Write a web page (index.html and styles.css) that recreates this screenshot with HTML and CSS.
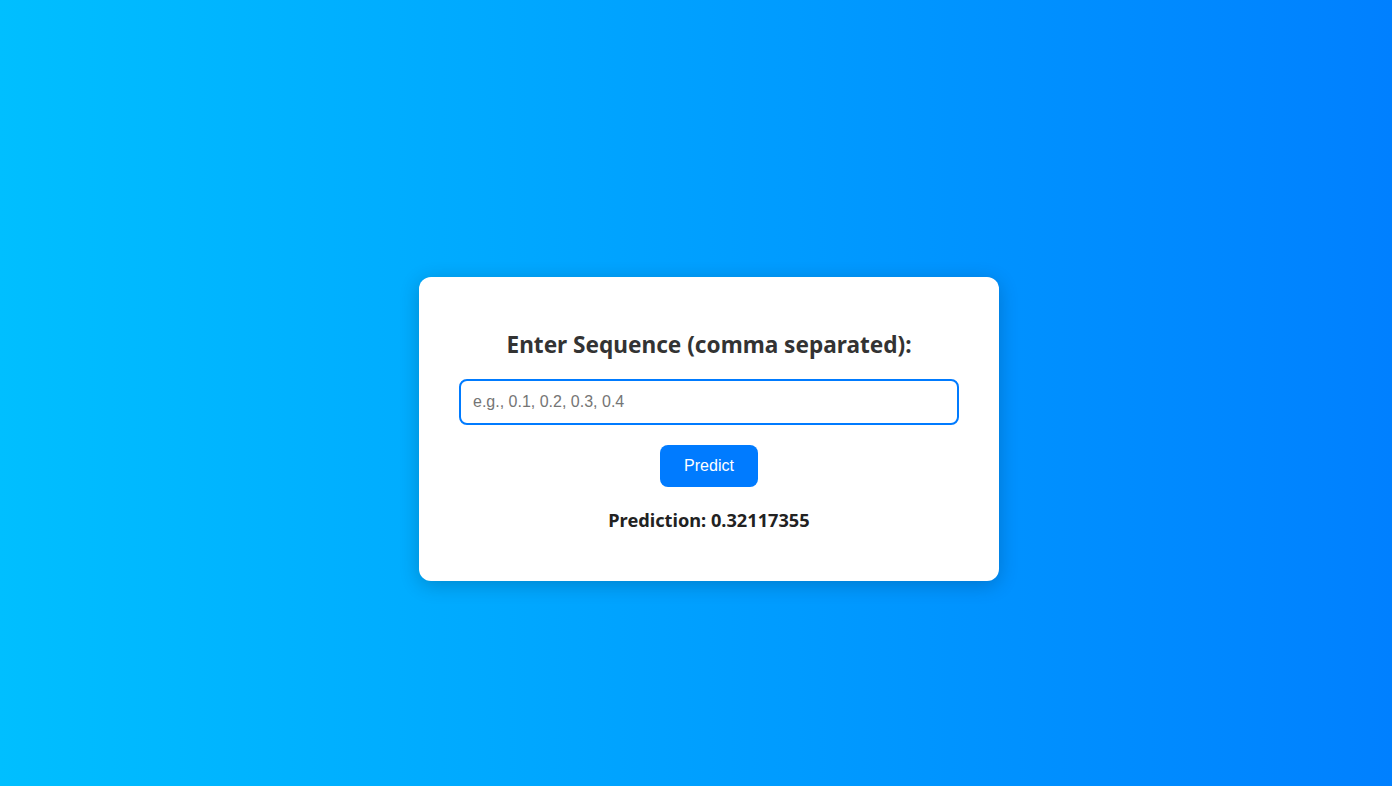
FILE: index.html
```html
<!DOCTYPE html>
<html lang="en">
<head>
<meta charset="UTF-8">
<title>Sequence Predictor</title>
<link rel="stylesheet" href="styles.css">
</head>
<body>
<div class="card">
  <h2 class="title">Enter Sequence (comma separated):</h2>
  <input class="seq-input" type="text" placeholder="e.g., 0.1, 0.2, 0.3, 0.4">
  <button class="predict-btn" type="button">Predict</button>
  <p class="result">Prediction: 0.32117355</p>
</div>
</body>
</html>
```
FILE: styles.css
```css
html, body {
  margin: 0;
  height: 100%;
}
body {
  box-sizing: border-box;
  padding: 72px 0 0 26px;
  display: flex;
  align-items: center;
  justify-content: center;
  background: linear-gradient(to right, #00bfff, #0080ff);
  font-family: "Segoe UI", "Noto Sans", sans-serif;
}
.card {
  box-sizing: border-box;
  width: 580px;
  padding: 30px 40px;
  background: #fff;
  border-radius: 12px;
  box-shadow: 0 4px 20px rgba(0, 0, 0, 0.2);
  display: flex;
  flex-direction: column;
  align-items: center;
}
.title {
  margin: 22px 0 18px;
  font-size: 22.6px;
  line-height: 32px;
  color: #333;
  font-weight: 700;
}
.seq-input {
  box-sizing: border-box;
  width: 500px;
  height: 46px;
  padding: 12px;
  border: 2px solid #007bff;
  border-radius: 8px;
  font-family: "Liberation Sans", Arial, sans-serif;
  font-size: 16px;
  outline: none;
}
.seq-input::placeholder {
  color: #757575;
}
.predict-btn {
  margin-top: 20px;
  height: 42px;
  padding: 0 24px;
  border: none;
  border-radius: 8px;
  background: #007bff;
  color: #fff;
  font-family: "Liberation Sans", Arial, sans-serif;
  font-size: 16px;
}
.result {
  margin: 21px 0 18px;
  font-size: 18.2px;
  line-height: 25px;
  font-weight: 700;
  color: #222;
}
```
